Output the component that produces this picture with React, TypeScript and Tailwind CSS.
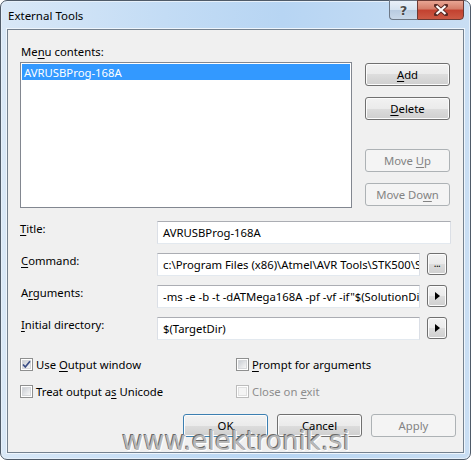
import React from "react";
import clsx from "clsx";

const ui = "font-['Noto_Sans',sans-serif] text-[11.3px] leading-[15px]";

function Btn({
  children,
  disabled,
  primary,
  className,
}: {
  children: React.ReactNode;
  disabled?: boolean;
  primary?: boolean;
  className?: string;
}) {
  return (
    <div
      className={clsx(
        "flex items-center justify-center h-[23px] rounded-[3px] border",
        disabled
          ? "border-[#adb2b5] bg-[#f4f4f4] text-[#838383]"
          : "bg-[linear-gradient(#f2f2f2_0%,#ebebeb_50%,#dddddd_50%,#cfcfcf_100%)] text-black shadow-[inset_0_0_0_1px_#fcfcfc]",
        !disabled && (primary ? "border-[#3c7fb1] shadow-[inset_0_0_0_1px_#a8e1f9]" : "border-[#707070]"),
        className
      )}
    >
      <span>{children}</span>
    </div>
  );
}

function SmallBtn({ children }: { children: React.ReactNode }) {
  return (
    <div className="flex items-center justify-center w-[20px] h-[22px] rounded-[3px] border border-[#707070] bg-[linear-gradient(#f2f2f2_0%,#ebebeb_50%,#dddddd_50%,#cfcfcf_100%)] shadow-[inset_0_0_0_1px_#fcfcfc]">
      {children}
    </div>
  );
}

function Arrow() {
  return (
    <svg width="5" height="8" viewBox="0 0 5 8">
      <path d="M0 0 L5 4 L0 8 Z" fill="#000" />
    </svg>
  );
}

function TextBox({ value, width }: { value: string; width: string }) {
  return (
    <div
      className={clsx(
        "h-[23px] bg-white border border-[#dbdfe6] border-t-[#abadb3] border-b-[#e3e9ef] pl-[5px] flex items-center overflow-hidden whitespace-nowrap text-black",
        width
      )}
    >
      <span>{value}</span>
    </div>
  );
}

function Check({
  checked,
  disabled,
  children,
}: {
  checked?: boolean;
  disabled?: boolean;
  children: React.ReactNode;
}) {
  return (
    <div className="flex items-center h-[13px] gap-[3px]">
      <div
        className={clsx(
          "w-[13px] h-[13px] border p-[1px] bg-white",
          disabled ? "border-[#bcbcbc]" : "border-[#8e8f8f]"
        )}
      >
        <div
          className={clsx(
            "w-full h-full relative",
            disabled
              ? "bg-[#f4f4f4] border border-[#e0e0e0]"
              : "bg-[linear-gradient(135deg,#cbcfd5,#f6f6f6)] border border-[#d6d8db]"
          )}
        >
          {checked && (
            <svg className="absolute -left-[1px] -top-[1px]" width="9" height="9" viewBox="0 0 9 9">
              <path d="M1 4.5 L3.3 7 L8 1.2" fill="none" stroke="#3b4e86" strokeWidth="1.7" />
            </svg>
          )}
        </div>
      </div>
      <span className={disabled ? "text-[#8d8d8d]" : "text-black"}>{children}</span>
    </div>
  );
}

export default function App() {
  return (
    <div className={clsx("relative w-[471px] h-[460px] bg-white", ui)}>
      <div className="w-full h-full flex flex-col rounded-[7px] border border-[#4f5b69] bg-[linear-gradient(90deg,#d9e8f7_0%,#c3dcf5_35%,#b7d5f3_60%,#c9def3_100%)] shadow-[inset_0_0_0_1px_#e6f0fa]">
        {/* title bar */}
        <div className="h-[28px] flex items-start justify-between pl-[7px] pr-[6px]">
          <div className="pt-[7px] text-black text-[11.5px]">External Tools</div>
          <div className="flex -mt-[1px]">
            <div className="w-[28px] h-[20px] rounded-bl-[4px] border border-[#6d7886] border-r-0 bg-[linear-gradient(#e9f0f8_0%,#d5e2f0_50%,#b8cbe0_50%,#c9d8e9_100%)] flex items-center justify-center text-[#4a4a4a] font-['DejaVu_Sans',sans-serif] font-bold text-[13px] [text-shadow:0_0_2px_#fff]">
              ?
            </div>
            <div className="w-[47px] h-[20px] rounded-br-[4px] border border-[#6b3a34] bg-[linear-gradient(#e8a593_0%,#d47c68_45%,#c2412f_50%,#cc5a45_100%)] flex items-center justify-center">
              <svg width="14" height="12" viewBox="0 0 14 12">
                <path d="M2 1.5 L12 10.5 M12 1.5 L2 10.5" stroke="#5a2a24" strokeWidth="4" strokeLinecap="square" />
                <path d="M2.5 2 L11.5 10 M11.5 2 L2.5 10" stroke="#ffffff" strokeWidth="2.2" />
              </svg>
            </div>
          </div>
        </div>

        {/* client area */}
        <div className="flex-1 mx-[6px] mb-[6px] border border-[#74818f] bg-[#f0f0f0] shadow-[0_0_0_1px_#eef5fc] flex flex-col">
          <div className="pt-[14px] pl-[13px] text-black">
            Me<u className="underline-offset-2">n</u>u contents:
          </div>

          <div className="mt-[3px] pl-[12px] flex items-start">
            <div className="w-[332px] h-[146px] border border-[#828790] bg-white p-[1px]">
              <div className="h-[16px] bg-[#3399ff] text-white pl-[2px] flex items-center">AVRUSBProg-168A</div>
            </div>
            <div className="ml-[13px] pt-[1px] w-[85px] flex flex-col">
              <Btn>
                <u className="underline-offset-2">A</u>dd
              </Btn>
              <Btn className="mt-[11px]">
                <u className="underline-offset-2">D</u>elete
              </Btn>
              <Btn disabled className="mt-[29px]">
                Move <u className="underline-offset-2">U</u>p
              </Btn>
              <Btn disabled className="mt-[11px]">
                Move Do<u className="underline-offset-2">w</u>n
              </Btn>
            </div>
          </div>

          <div className="mt-[13px] flex flex-col gap-[9px]">
            <div className="flex items-start">
              <div className="w-[149px] pl-[12px]">
                <u className="underline-offset-2">T</u>itle:
              </div>
              <TextBox value="AVRUSBProg-168A" width="w-[294px]" />
            </div>
            <div className="flex items-start">
              <div className="w-[149px] pl-[13px]">
                <u className="underline-offset-2">C</u>ommand:
              </div>
              <TextBox value="c:\Program Files (x86)\Atmel\AVR Tools\STK500\Stk500.exe" width="w-[263px]" />
              <div className="ml-[7px]">
                <SmallBtn>
                  <span className="text-[10px] leading-none -mt-[3px] tracking-[-0.5px]">...</span>
                </SmallBtn>
              </div>
            </div>
            <div className="flex items-start">
              <div className="w-[149px] pl-[13px]">
                A<u className="underline-offset-2">r</u>guments:
              </div>
              <TextBox value={'-ms -e -b -t -dATMega168A -pf -vf -if"$(SolutionDir)$(ProjectName)\\Debug\\$(ProjectName).hex"'} width="w-[263px]" />
              <div className="ml-[7px]">
                <SmallBtn>
                  <Arrow />
                </SmallBtn>
              </div>
            </div>
            <div className="flex items-start">
              <div className="w-[149px] pl-[13px]">
                <u className="underline-offset-2">I</u>nitial directory:
              </div>
              <TextBox value="$(TargetDir)" width="w-[263px]" />
              <div className="ml-[7px]">
                <SmallBtn>
                  <Arrow />
                </SmallBtn>
              </div>
            </div>
          </div>

          <div className="mt-[18px] pl-[12px] grid grid-cols-[216px_1fr] gap-y-[14px]">
            <Check checked>
              Use <u className="underline-offset-2">O</u>utput window
            </Check>
            <Check>
              <u className="underline-offset-2">P</u>rompt for arguments
            </Check>
            <Check>
              Treat output a<u className="underline-offset-2">s</u> Unicode
            </Check>
            <Check disabled>
              Close on <u className="underline-offset-2">e</u>xit
            </Check>
          </div>

          <div className="mt-[16px] pr-[7px] flex justify-end gap-[9px]">
            <Btn primary className="w-[85px]">
              OK
            </Btn>
            <Btn className="w-[85px]">Cancel</Btn>
            <Btn disabled className="w-[85px]">
              Apply
            </Btn>
          </div>
        </div>
      </div>

      {/* watermark */}
      <div className="absolute left-[122px] top-[428px] font-['DejaVu_Sans',sans-serif] text-[26px] leading-[26px] text-[#b8b8b8] [text-shadow:-1px_-1px_0_#6a6a6a,1px_1px_0_#ffffff] pointer-events-none">
        www.elektronik.si
      </div>
    </div>
  );
}
